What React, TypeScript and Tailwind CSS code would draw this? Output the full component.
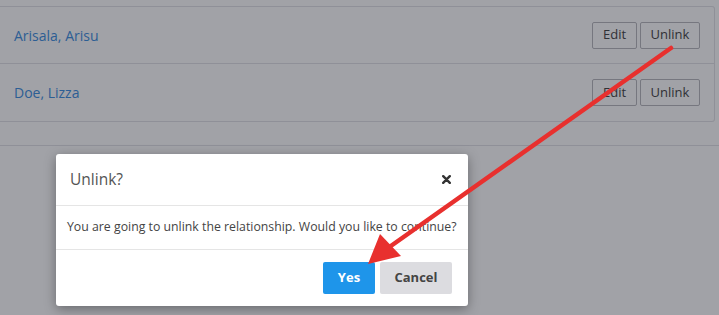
import React from 'react';

type Person = { name: string };

const people: Person[] = [{ name: 'Arisala, Arisu' }, { name: 'Doe, Lizza' }];

const RowButton: React.FC<{ label: string; className?: string }> = ({ label, className }) => (
  <button className={`h-[27px] rounded-[2px] border border-[#b8b8bd] bg-white text-[13px] text-[#444] ${className ?? ''}`}>
    {label}
  </button>
);

const RelationRow: React.FC<{ person: Person; last?: boolean }> = ({ person, last }) => (
  <div className={`flex h-[57px] items-center justify-between pl-[14px] pr-[14px] ${last ? '' : 'border-b border-[#e2e2e6]'}`}>
    <a className="text-[14px] text-[#3d8ee0]">{person.name}</a>
    <div className="flex gap-[3px]">
      <RowButton label="Edit" className="w-[45px]" />
      <RowButton label="Unlink" className="w-[60px]" />
    </div>
  </div>
);

// red annotation arrow drawn over the screenshot
const Arrow = () => (
  <svg className="pointer-events-none absolute inset-0" width="719" height="315" viewBox="0 0 719 315">
    <line x1="671" y1="48" x2="388" y2="248" stroke="#e8302e" strokeWidth="4.5" strokeLinecap="round" />
    <polygon points="368,264 380,234 401,256" fill="#e8302e" />
  </svg>
);

const CloseIcon = () => (
  <svg width="9" height="9" viewBox="0 0 9 9">
    <path d="M1.2 1.2 L7.8 7.8 M7.8 1.2 L1.2 7.8" stroke="#333" strokeWidth="2.4" strokeLinecap="round" />
  </svg>
);

const ConfirmDialog = () => (
  <div className="absolute left-[56px] top-[154px] w-[412px] rounded-[3px] bg-white shadow-[0_3px_12px_rgba(0,0,0,0.35)]">
    <div className="flex h-[52px] items-center justify-between border-b border-[#e5e5e5] pl-[14px] pr-[17px]">
      <span className="text-[15.5px] text-[#555]">Unlink?</span>
      <CloseIcon />
    </div>
    <div className="flex h-[44px] items-center border-b border-[#e5e5e5] px-[11px]">
      <p className="whitespace-nowrap text-[12.3px] text-[#444]">You are going to unlink the relationship. Would you like to continue?</p>
    </div>
    <div className="flex h-[56px] items-center justify-end gap-[5px] pr-[16px]">
      <button className="h-[32px] w-[52px] rounded-[2px] bg-[#1e95ea] text-[13px] font-bold text-white">Yes</button>
      <button className="h-[32px] w-[72px] rounded-[2px] bg-[#dcdce0] text-[13px] font-bold text-[#444]">Cancel</button>
    </div>
  </div>
);

export default function App() {
  return (
    <div className="relative h-[315px] w-[719px] overflow-hidden bg-white font-['Open_Sans',sans-serif]">
      <div className="pt-[6px]">
        <div className="mr-[4px] rounded-tr-[3px] rounded-br-[3px] border-y border-r border-[#e2e2e6]">
          {people.map((p, i) => (
            <RelationRow key={p.name} person={p} last={i === people.length - 1} />
          ))}
        </div>
        <div className="h-[24px] border-b border-[#e2e2e6]" />
      </div>
      <div className="absolute inset-0 bg-[rgba(20,22,35,0.4)]" />
      <ConfirmDialog />
      <Arrow />
    </div>
  );
}
